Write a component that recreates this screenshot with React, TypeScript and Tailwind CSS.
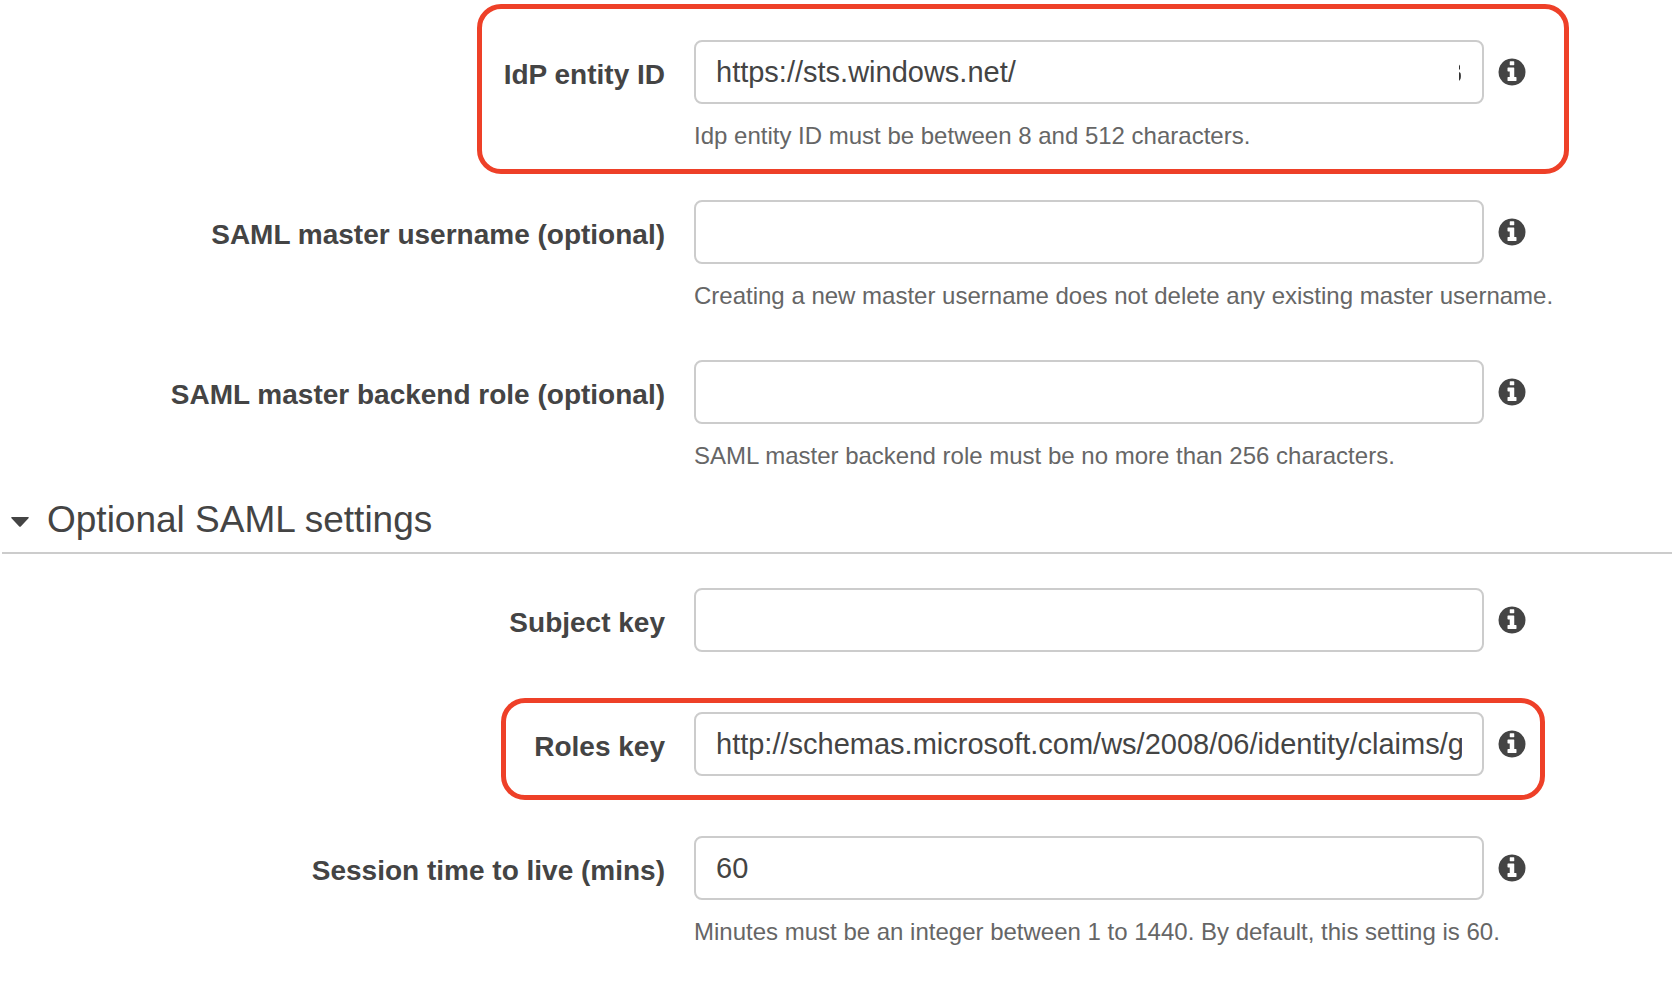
import { useState, type ReactNode } from "react";

function InfoIcon() {
  return (
    <svg viewBox="100 100 1592 1592" className="size-7 fill-[#444]" aria-hidden="true">
      <path d="M1152 1376v-160q0-14-9-23t-23-9h-96v-512q0-14-9-23t-23-9h-320q-14 0-23 9t-9 23v160q0 14 9 23t23 9h96v320h-96q-14 0-23 9t-9 23v160q0 14 9 23t23 9h448q14 0 23-9t9-23zM1024 480v-160q0-14-9-23t-23-9h-192q-14 0-23 9t-9 23v160q0 14 9 23t23 9h192q14 0 23-9t9-23zM1664 896q0 209-103 385.5t-279.5 279.5-385.5 103-385.5-103-279.5-279.5-103-385.5 103-385.5 279.5-279.5 385.5-103 385.5 103 279.5 279.5 103 385.5z" />
    </svg>
  );
}

type FieldProps = {
  id: string;
  label: string;
  value?: string;
  help?: string;
  children?: ReactNode;
};

function Field({ id, label, value = "", help, children }: FieldProps) {
  const [text, setText] = useState(value);
  return (
    <div className="grid grid-cols-[694fr_790fr_188fr] items-center">
      <label htmlFor={id} className="pt-1.5 pr-[29px] text-right text-[28px] leading-8 font-bold">
        {label}
      </label>
      <div className="relative">
        <input
          id={id}
          type="text"
          value={text}
          onChange={(e) => setText(e.target.value)}
          aria-describedby={help ? `${id}-help` : undefined}
          className="block h-16 w-full rounded-lg border-2 border-[#ccc] bg-white px-5 text-[29px]"
        />
        {children}
      </div>
      <button type="button" aria-label={`About ${label}`} className="ml-3.5 w-7">
        <InfoIcon />
      </button>
      {help && (
        <p id={`${id}-help`} className="col-span-2 col-start-2 mt-4 text-[24px] leading-8 whitespace-nowrap text-[#666]">
          {help}
        </p>
      )}
    </div>
  );
}

export default function App() {
  const [open, setOpen] = useState(true);
  return (
    <main className="overflow-x-hidden bg-white pt-10 pb-12 font-['Liberation_Sans',Arial,sans-serif] text-[#444]">
      <div className="flex flex-col gap-12">
        <Field
          id="idp"
          label="IdP entity ID"
          value="https://sts.windows.net/"
          help="Idp entity ID must be between 8 and 512 characters."
        >
          <svg viewBox="0 0 2 18" className="pointer-events-none absolute top-6 right-[23px] h-[18px] w-0.5 fill-[#333]" aria-hidden="true">
            <path d="M0 0.500L1 2V5L0 6zM0 8L1.500 9Q2.300 12 1.500 15L0 17z" />
          </svg>
          <div className="pointer-events-none absolute -top-9 -right-[85px] -bottom-[70px] -left-[217px] rounded-3xl border-5 border-[#ee4028]" />
        </Field>
        <Field
          id="username"
          label="SAML master username (optional)"
          help="Creating a new master username does not delete any existing master username."
        />
        <Field
          id="role"
          label="SAML master backend role (optional)"
          help="SAML master backend role must be no more than 256 characters."
        />
      </div>
      <h2 className="mt-6 ml-0.5 border-b-2 border-[#ccc] pt-0.5 pb-2.5">
        <button
          type="button"
          aria-expanded={open}
          onClick={() => setOpen(!open)}
          className="flex items-center gap-[18px] pl-[9px] text-[37px] leading-11"
        >
          <svg viewBox="0 0 18 10" className="mt-1 h-2.5 w-[18px] fill-[#444]" aria-hidden="true">
            <path d="M1 0h16q1.600 0 .5 1.200l-7.500 8q-1 1-2 0l-7.500-8q-1.100-1.200.5-1.200z" />
          </svg>
          Optional SAML settings
        </button>
      </h2>
      {open && (
        <div className="mt-[34px] flex flex-col gap-15">
          <Field id="subject" label="Subject key" />
          <Field id="roles" label="Roles key" value="http://schemas.microsoft.com/ws/2008/06/identity/claims/groups">
            <div className="pointer-events-none absolute -top-3.5 -right-[61px] -bottom-6 -left-[193px] rounded-3xl border-5 border-[#ee4028]" />
          </Field>
          <Field
            id="session"
            label="Session time to live (mins)"
            value="60"
            help="Minutes must be an integer between 1 to 1440. By default, this setting is 60."
          />
        </div>
      )}
    </main>
  );
}
